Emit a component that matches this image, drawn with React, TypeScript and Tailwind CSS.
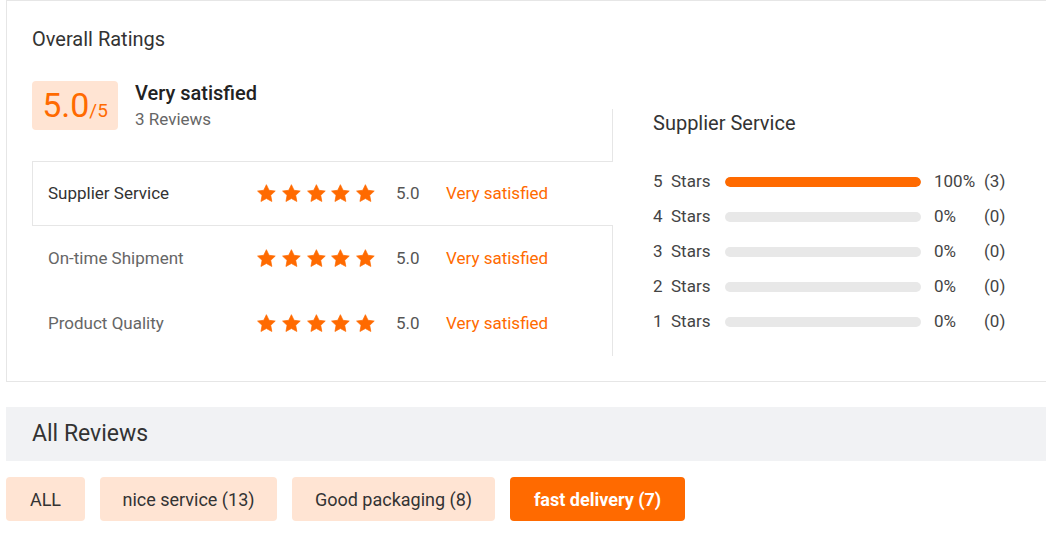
import React from "react";

const Star = () => (
  <svg width="21" height="21" viewBox="0 0 24 24" className="block">
    <path
      d="M12 1.8l3.1 6.5 7.1.9-5.2 4.9 1.3 7.1L12 17.8l-6.3 3.4 1.3-7.1L1.8 9.2l7.1-.9L12 1.8z"
      fill="#ff6a00"
      stroke="#ff6a00"
      strokeWidth="0.8"
      strokeLinejoin="round"
    />
  </svg>
);

const rows = [
  { label: "Supplier Service", active: true },
  { label: "On-time Shipment", active: false },
  { label: "Product Quality", active: false },
];

const dist = [
  { n: 5, pct: 100, count: 3 },
  { n: 4, pct: 0, count: 0 },
  { n: 3, pct: 0, count: 0 },
  { n: 2, pct: 0, count: 0 },
  { n: 1, pct: 0, count: 0 },
];

const tags = [
  { t: "ALL", active: false, w: "w-[79px]" },
  { t: "nice service (13)", active: false, w: "w-[177px]" },
  { t: "Good packaging (8)", active: false, w: "w-[203px]" },
  { t: "fast delivery (7)", active: true, w: "w-[175px]" },
];

export default function App() {
  return (
    <div className="w-[1046px] h-[538px] bg-white overflow-hidden font-['Roboto',sans-serif] text-[#333]">
      <div className="ml-[6px] border border-r-0 border-[#e6e6e6] pl-[25px] pt-[25px] pb-[25px]">
        <div className="text-[20px] leading-[26px] text-[#333]">Overall Ratings</div>
        <div className="flex mt-[29px]">
          <div className="w-[580px] flex flex-col">
            <div className="h-[49px] flex items-center gap-[17px]">
              <div className="w-[86px] h-[49px] rounded-[4px] bg-[#ffe4d3] flex items-baseline justify-center pt-[2px]">
                <span className="text-[34px] leading-[45px] text-[#ff6a00]">5.0</span>
                <span className="text-[19px] text-[#ff6a00]">/5</span>
              </div>
              <div className="flex flex-col">
                <span className="text-[20px] leading-[26px] font-medium text-[#222]">Very satisfied</span>
                <span className="text-[17px] leading-[26px] text-[#666]">3 Reviews</span>
              </div>
            </div>
            <div className="mt-[31px] flex flex-col">
              {rows.map((r) => (
                <div
                  key={r.label}
                  className={
                    r.active
                      ? "relative z-10 -mr-px bg-white h-[65px] border border-r-0 border-[#e6e6e6] flex items-center pl-[15px]"
                      : "h-[65px] flex items-center pl-[16px]"
                  }
                >
                  <span className={"w-[208px] text-[17px] " + (r.active ? "text-[#333]" : "text-[#666]")}>
                    {r.label}
                  </span>
                  <div className="flex gap-[4px] w-[120px]">
                    <Star />
                    <Star />
                    <Star />
                    <Star />
                    <Star />
                  </div>
                  <span className="ml-[20px] w-[50px] text-[17px] text-[#555]">5.0</span>
                  <span className="text-[17px] text-[#ff6a00]">Very satisfied</span>
                </div>
              ))}
            </div>
          </div>
          <div className="flex-1 mt-[28px] border-l border-[#e6e6e6] pl-[40px]">
            <div className="text-[20px] leading-[28px] text-[#333]">Supplier Service</div>
            <div className="mt-[27px] flex flex-col">
              {dist.map((d) => (
                <div key={d.n} className="h-[35px] flex items-center text-[17px] text-[#444]">
                  <span className="w-[72px] flex">
                    <span className="w-[18px]">{d.n}</span>
                    <span>Stars</span>
                  </span>
                  <div className="w-[196px] h-[10px] rounded-full bg-[#e8e8e8] overflow-hidden">
                    <div className="h-full rounded-full bg-[#ff6a00]" style={{ width: `${d.pct}%` }} />
                  </div>
                  <span className="ml-[13px] w-[50px]">{d.pct}%</span>
                  <span>({d.count})</span>
                </div>
              ))}
            </div>
          </div>
        </div>
      </div>
      <div className="mt-[25px] ml-[6px] h-[54px] bg-[#f1f2f4] pl-[26px] flex items-center text-[23px] text-[#333]">
        All Reviews
      </div>
      <div className="mt-[16px] ml-[6px] flex gap-[15px]">
        {tags.map((t) => (
          <div
            key={t.t}
            className={
              t.w +
              " h-[44px] rounded-[4px] flex items-center justify-center text-[18px] " +
              (t.active ? "bg-[#ff6a00] text-white font-bold" : "bg-[#ffe4d3] text-[#333]")
            }
          >
            {t.t}
          </div>
        ))}
      </div>
    </div>
  );
}
